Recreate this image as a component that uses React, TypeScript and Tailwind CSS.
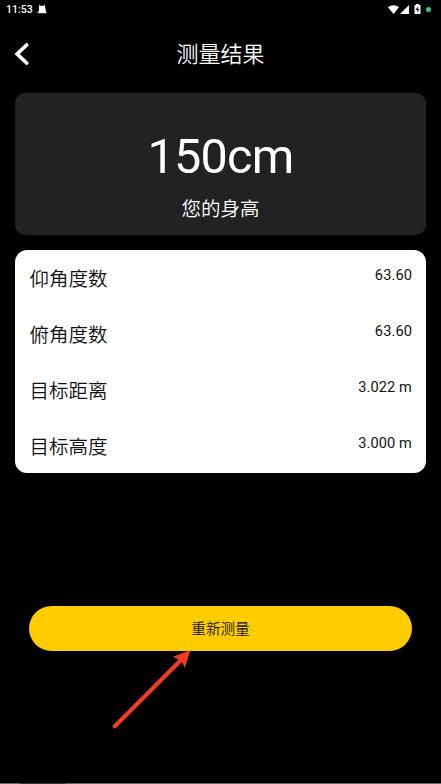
const rows = [
  { label: "仰角度数", value: "63.60" },
  { label: "俯角度数", value: "63.60" },
  { label: "目标距离", value: "3.022 m" },
  { label: "目标高度", value: "3.000 m" },
];

const StatusBar = () => {
  return (
    <div className="flex h-[18px] items-center justify-between pl-[6px] pr-[10px] text-white">
      <div className="flex items-center">
        <span className="pt-[1px] text-[10.5px] font-medium leading-[18px]">11:53</span>
        <svg className="ml-[4px]" width="10" height="10" viewBox="0 0 10 10" fill="#fff">
          <path d="M2.2 0.4 L3.3 1.8 H6.7 L7.8 0.4 L8.2 4 L9.5 9.3 H2 L0.3 8.2 L0.6 7.4 L1.7 7.8 L2 4 Z" />
        </svg>
      </div>
      <div className="flex items-center">
        <svg width="11" height="9" viewBox="0 0 11 9" fill="#fff">
          <path d="M0 2.3 C3 -0.5 8 -0.5 11 2.3 L5.5 9 Z" />
        </svg>
        <svg className="ml-[1px]" width="9" height="9" viewBox="0 0 9 9" fill="#fff">
          <path d="M9 0 V9 H0 Z" />
        </svg>
        <svg className="ml-[5px]" width="7" height="10" viewBox="0 0 7 10">
          <path d="M2 0 H5 V1 H6.5 V10 H0.5 V1 H2 Z" fill="#fff" />
          <path d="M3.8 2.3 L1.6 5.8 H3.2 V8.5 L5.4 5 H3.8 Z" fill="#000" />
        </svg>
        <span className="ml-[5px] h-[5px] w-[5px] rounded-full bg-[#36c978]" />
      </div>
    </div>
  );
};

const App = () => {
  return (
    <div className="relative flex h-[784px] w-[441px] flex-col overflow-hidden bg-black font-['Roboto','Noto_Sans_CJK_SC',sans-serif]">
      <StatusBar />
      <header className="flex h-[75px] items-center px-[14px] pb-[3px]">
        <button className="w-[20px]">
          <svg width="16" height="22" viewBox="0 0 16 22" fill="none" stroke="#fff" strokeWidth="3.8" strokeLinecap="round" strokeLinejoin="miter">
            <path d="M12.6 2 L3.2 11 L12.6 20" />
          </svg>
        </button>
        <h1 className="flex-1 pt-[2px] text-center text-[22px] font-[350] leading-[32px] text-white">测量结果</h1>
        <div className="w-[20px]" />
      </header>

      <section className="mx-[15px] flex h-[142px] flex-col items-center rounded-[10px] bg-[#222222] pt-[34px] text-white">
        <p className="text-[48.5px] leading-[60px] tracking-[-0.7px]">150cm</p>
        <p className="mt-[8px] text-[19.5px] font-[350] leading-[29px]">您的身高</p>
      </section>

      <section className="mx-[15px] mt-[15px] h-[223px] rounded-[12px] bg-white pl-[14.5px] pr-[14px] text-[#111111]">
        {rows.map((row) => (
          <div key={row.label} className="flex h-[56px] items-start justify-between pt-[14px]">
            <span className="pt-[2px] text-[19.5px] font-[350] leading-[28px]">{row.label}</span>
            <span className="text-[14.6px] leading-[22px] tracking-[0.1px]">{row.value}</span>
          </div>
        ))}
      </section>

      <button className="mx-[29px] mt-[133px] h-[45px] rounded-full bg-[#ffcc00] pt-[2px] text-[14.6px] font-[350] text-[#111111]">
        重新测量
      </button>

      <svg className="absolute left-[108px] top-[646px]" width="90" height="90" viewBox="0 0 90 90">
        <path d="M6.8 80.2 L74 13" stroke="#f23d23" strokeWidth="4.2" strokeLinecap="round" />
        <path d="M82.4 4.3 L76.8 22.3 L73.6 15 L64.8 10.7 Z" fill="#f23d23" />
      </svg>

      <div className="mt-auto flex h-[1px] bg-[#6b625d]">
        <div className="ml-[20px] w-[46px] bg-[#3d3535]" />
      </div>
    </div>
  );
};

export default App;
